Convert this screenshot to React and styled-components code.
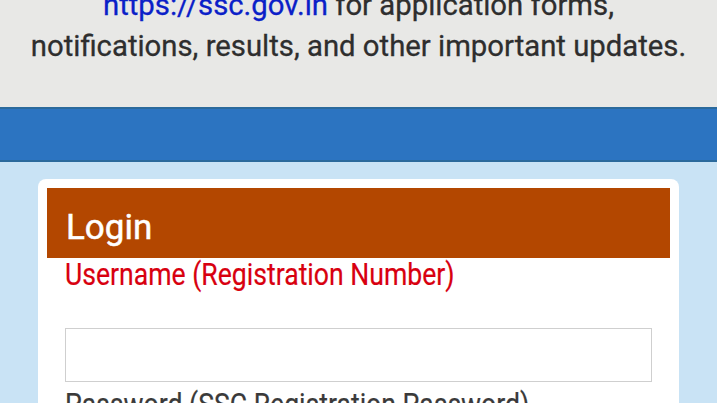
import React from "react";
import styled, { createGlobalStyle } from "styled-components";

const Global = createGlobalStyle`
  html, body { margin: 0; padding: 0; }
  body { font-family: Roboto, "Noto Sans", Arial, sans-serif; background: #c9e3f5; overflow: hidden; }
`;

const Notice = styled.section`
  height: 107px;
  background: #e8e8e6;
  overflow: hidden;
`;

const NoticeText = styled.p`
  margin: -15px 0 0;
  text-align: center;
  font-size: 29.3px;
  font-weight: 400;
  line-height: 41px;
  color: #2e2e2e;
  -webkit-text-stroke: 0.3px #2e2e2e;
`;

const Link = styled.a`
  color: #0b1fc8;
  -webkit-text-stroke: 0.3px #0b1fc8;
  text-decoration: none;
`;

const BlueBar = styled.div`
  height: 51px;
  background: #2c74c1;
  border-top: 2px solid #2b6a9c;
  border-bottom: 2px solid #2b6a9c;
`;

const Main = styled.main`
  padding: 17px 38px 0;
`;

const Card = styled.div`
  background: #fff;
  border-radius: 8px;
  padding: 9px;
  height: 260px;
`;

const Header = styled.h2`
  margin: 0;
  height: 70px;
  box-sizing: border-box;
  background: #b34700;
  color: #fff;
  font-weight: 400;
  -webkit-text-stroke: 0.5px #fff;
  font-size: 35px;
  line-height: 1;
  padding: 22px 19px 0;
`;

const Body = styled.div`
  padding: 0 18px;
`;

const Label = styled.label`
  display: block;
  width: max-content;
  font-size: 30.5px;
  font-weight: 400;
  line-height: 30px;
  transform: scaleX(0.872);
  transform-origin: left center;
  color: ${(p) => (p.$accent ? "#d8000f" : "#3a3a3a")};
  -webkit-text-stroke: 0.2px ${(p) => (p.$accent ? "#d8000f" : "#3a3a3a")};
  margin-top: ${(p) => p.$top || "0"};
`;

const Input = styled.input`
  display: block;
  box-sizing: border-box;
  width: 100%;
  height: 54px;
  border: 1px solid #cfcfcf;
  margin-top: 38px;
  background: #fff;
  outline: none;
`;

export default function App() {
  return (
    <>
      <Global />
      <Notice>
        <NoticeText>
          <Link href="#">https://ssc.gov.in</Link> for application forms,
          <br />
          notifications, results, and other important updates.
        </NoticeText>
      </Notice>
      <BlueBar />
      <Main>
        <Card>
          <Header>Login</Header>
          <Body>
            <Label $accent $top="2px">Username (Registration Number)</Label>
            <Input type="text" />
            <Label $top="8px">Password (SSC Registration Password)</Label>
          </Body>
        </Card>
      </Main>
    </>
  );
}
